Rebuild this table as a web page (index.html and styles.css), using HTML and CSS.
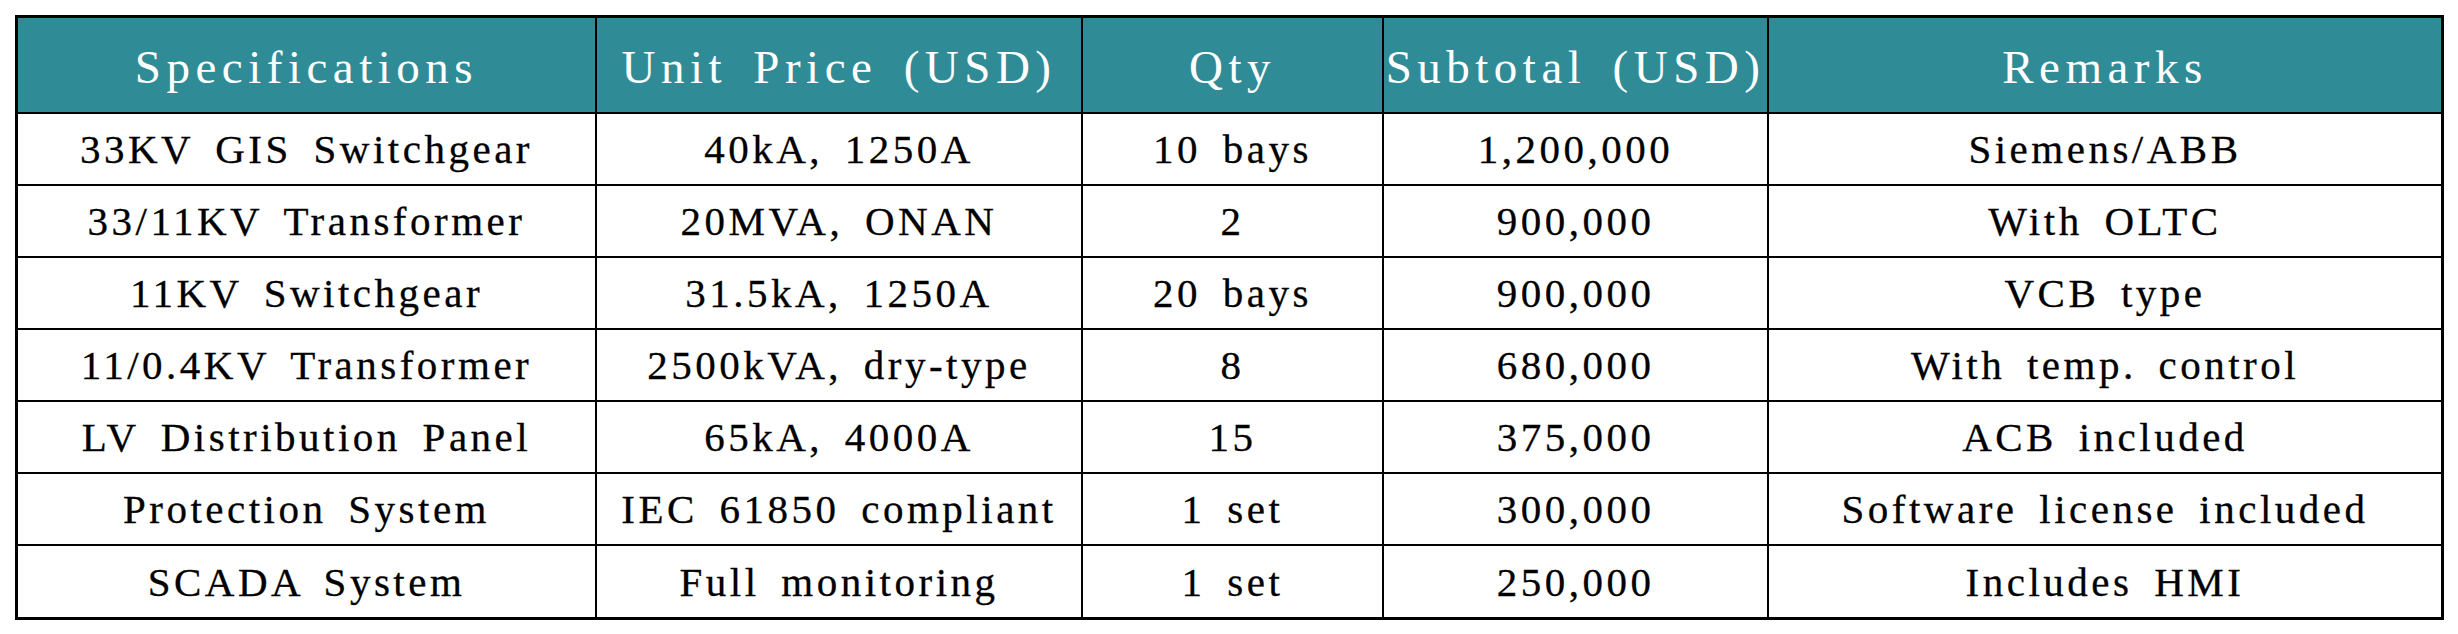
FILE: index.html
```html
<!DOCTYPE html>
<html lang="en">
<head>
<meta charset="utf-8">
<title>Equipment Quotation</title>
<link rel="stylesheet" href="styles.css">
</head>
<body>
<div class="sheet">
  <div class="grid" role="table">
    <div class="cell head" role="columnheader">Specifications</div>
    <div class="cell head" role="columnheader">Unit Price (USD)</div>
    <div class="cell head" role="columnheader">Qty</div>
    <div class="cell head" role="columnheader">Subtotal (USD)</div>
    <div class="cell head last-col" role="columnheader">Remarks</div>

    <div class="cell" role="cell">33KV GIS Switchgear</div>
    <div class="cell" role="cell">40kA, 1250A</div>
    <div class="cell" role="cell">10 bays</div>
    <div class="cell" role="cell">1,200,000</div>
    <div class="cell last-col" role="cell">Siemens/ABB</div>

    <div class="cell" role="cell">33/11KV Transformer</div>
    <div class="cell" role="cell">20MVA, ONAN</div>
    <div class="cell" role="cell">2</div>
    <div class="cell" role="cell">900,000</div>
    <div class="cell last-col" role="cell">With OLTC</div>

    <div class="cell" role="cell">11KV Switchgear</div>
    <div class="cell" role="cell">31.5kA, 1250A</div>
    <div class="cell" role="cell">20 bays</div>
    <div class="cell" role="cell">900,000</div>
    <div class="cell last-col" role="cell">VCB type</div>

    <div class="cell" role="cell">11/0.4KV Transformer</div>
    <div class="cell" role="cell">2500kVA, dry-type</div>
    <div class="cell" role="cell">8</div>
    <div class="cell" role="cell">680,000</div>
    <div class="cell last-col" role="cell">With temp. control</div>

    <div class="cell" role="cell">LV Distribution Panel</div>
    <div class="cell" role="cell">65kA, 4000A</div>
    <div class="cell" role="cell">15</div>
    <div class="cell" role="cell">375,000</div>
    <div class="cell last-col" role="cell">ACB included</div>

    <div class="cell" role="cell">Protection System</div>
    <div class="cell" role="cell">IEC 61850 compliant</div>
    <div class="cell" role="cell">1 set</div>
    <div class="cell" role="cell">300,000</div>
    <div class="cell last-col" role="cell">Software license included</div>

    <div class="cell last-row" role="cell">SCADA System</div>
    <div class="cell last-row" role="cell">Full monitoring</div>
    <div class="cell last-row" role="cell">1 set</div>
    <div class="cell last-row" role="cell">250,000</div>
    <div class="cell last-row last-col" role="cell">Includes HMI</div>
  </div>
</div>
</body>
</html>
```

FILE: styles.css
```css
html, body {
  margin: 0;
  padding: 0;
  background: #ffffff;
}

.sheet {
  padding: 15px 0 0 15px;
}

.grid {
  display: grid;
  grid-template-columns: 579px 486px 301px 385px 672px;
  grid-template-rows: 96px repeat(6, 72px) 71px;
  width: 2423px;
  border: 3px solid #000;
  font-family: "Liberation Serif", "Times New Roman", serif;
  color: #000;
}

.cell {
  box-sizing: border-box;
  display: flex;
  align-items: center;
  justify-content: center;
  border-right: 2px solid #000;
  border-bottom: 2px solid #000;
  font-size: 41px;
  line-height: 1;
  letter-spacing: 3.5px;
  word-spacing: 8px;
  white-space: nowrap;
  padding-top: 1px;
  -webkit-text-stroke: 0.3px currentColor;
}

.head {
  background: #2f8c97;
  color: #ffffff;
  font-size: 47px;
  letter-spacing: 5.5px;
  word-spacing: 9px;
  padding-top: 5px;
  -webkit-text-stroke: 0;
}

.last-col {
  border-right: none;
}

.last-row {
  border-bottom: none;
}
```
